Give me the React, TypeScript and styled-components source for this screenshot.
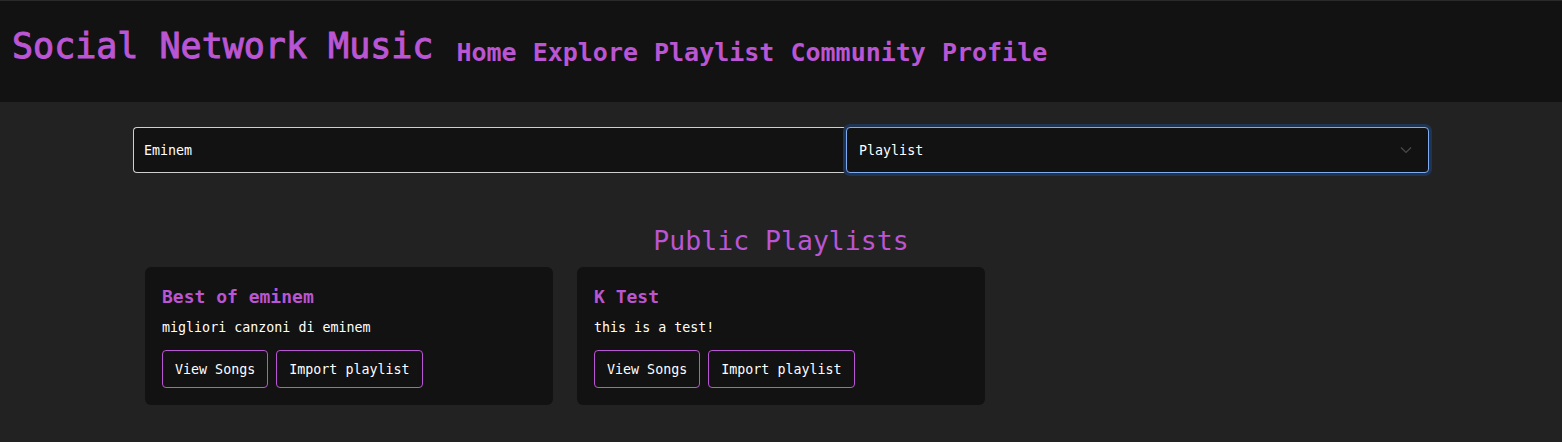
import React from "react";
import styled, { createGlobalStyle } from "styled-components";

const purple = "#ba55d3";

const Global = createGlobalStyle`
  html, body { margin: 0; padding: 0; background: #222222; }
  body { font-family: "DejaVu Sans Mono", "Liberation Mono", monospace; color: #fff; }
  * { box-sizing: border-box; }
`;

const Header = styled.header`
  height: 102px;
  background: #121212;
  border-top: 1px solid #2a2a2a;
  display: flex;
  align-items: center;
  padding: 0 12px 10px 12px;
  gap: 23px;
`;

const Brand = styled.h1`
  margin: 0;
  font-size: 35px;
  font-weight: 400;
  color: ${purple};
  line-height: 1;
  -webkit-text-stroke: 1px ${purple};
`;

const Nav = styled.nav`
  display: flex;
  gap: 16px;
  margin-top: 12px;
`;

const NavLink = styled.a`
  font-size: 25px;
  font-weight: 700;
  color: ${purple};
  text-decoration: none;
  line-height: 1;
`;

const Main = styled.main`
  width: 1296px;
  margin: 0 auto;
  padding-top: 25px;
`;

const SearchRow = styled.div`
  display: grid;
  grid-template-columns: 713px 1fr;
  height: 46px;
`;

const Input = styled.input`
  background: #121212;
  border: 1px solid #cfcfcf;
  border-right: none;
  border-radius: 4px 0 0 4px;
  color: #fff;
  font-family: inherit;
  font-size: 13.333px;
  padding: 0 10px;
  outline: none;
  height: 100%;
`;

const SelectBox = styled.div`
  position: relative;
  background: #121212;
  border: 1px solid #7fabef;
  border-radius: 4px;
  box-shadow: 0 0 0 3px #1d3454;
  display: flex;
  align-items: center;
  padding: 0 12px;
  font-size: 13.333px;
  color: #fff;
  justify-content: space-between;
`;

const Heading = styled.h2`
  margin: 52px 0 0;
  text-align: center;
  font-size: 26.5px;
  font-weight: 400;
  color: ${purple};
  line-height: 32px;
`;

const Grid = styled.div`
  display: grid;
  grid-template-columns: repeat(3, 408px);
  gap: 24px;
  padding: 0 12px;
  margin-top: 10px;
`;

const Card = styled.div`
  background: #121212;
  border-radius: 6px;
  padding: 19px 17px 17px;
`;

const CardTitle = styled.h3`
  margin: 0;
  font-size: 18px;
  font-weight: 700;
  color: ${purple};
  line-height: 21px;
`;

const CardDesc = styled.p`
  margin: 13px 0 0;
  font-size: 13.333px;
  line-height: 16px;
  color: #fff;
`;

const Buttons = styled.div`
  display: flex;
  gap: 8px;
  margin-top: 14px;
`;

const Button = styled.button`
  background: #121212;
  border: 1px solid ${purple};
  border-radius: 4px;
  color: #fff;
  font-family: inherit;
  font-size: 13.333px;
  height: 38px;
  padding: 0 12px;
  cursor: pointer;
`;

const playlists = [
  { title: "Best of eminem", desc: "migliori canzoni di eminem" },
  { title: "K Test", desc: "this is a test!" },
];

export default function App() {
  return (
    <>
      <Global />
      <Header>
        <Brand>Social Network Music</Brand>
        <Nav>
          {["Home", "Explore", "Playlist", "Community", "Profile"].map((n) => (
            <NavLink key={n} href="#">{n}</NavLink>
          ))}
        </Nav>
      </Header>
      <Main>
        <SearchRow>
          <Input defaultValue="Eminem" />
          <SelectBox>
            <span>Playlist</span>
            <svg width="12" height="8" viewBox="0 0 12 8" style={{ marginRight: 4 }}>
              <path d="M1 1.5 L6 6.5 L11 1.5" fill="none" stroke="#4a4a4a" strokeWidth="1.2" />
            </svg>
          </SelectBox>
        </SearchRow>
        <Heading>Public Playlists</Heading>
        <Grid>
          {playlists.map((p) => (
            <Card key={p.title}>
              <CardTitle>{p.title}</CardTitle>
              <CardDesc>{p.desc}</CardDesc>
              <Buttons>
                <Button>View Songs</Button>
                <Button>Import playlist</Button>
              </Buttons>
            </Card>
          ))}
        </Grid>
      </Main>
    </>
  );
}
